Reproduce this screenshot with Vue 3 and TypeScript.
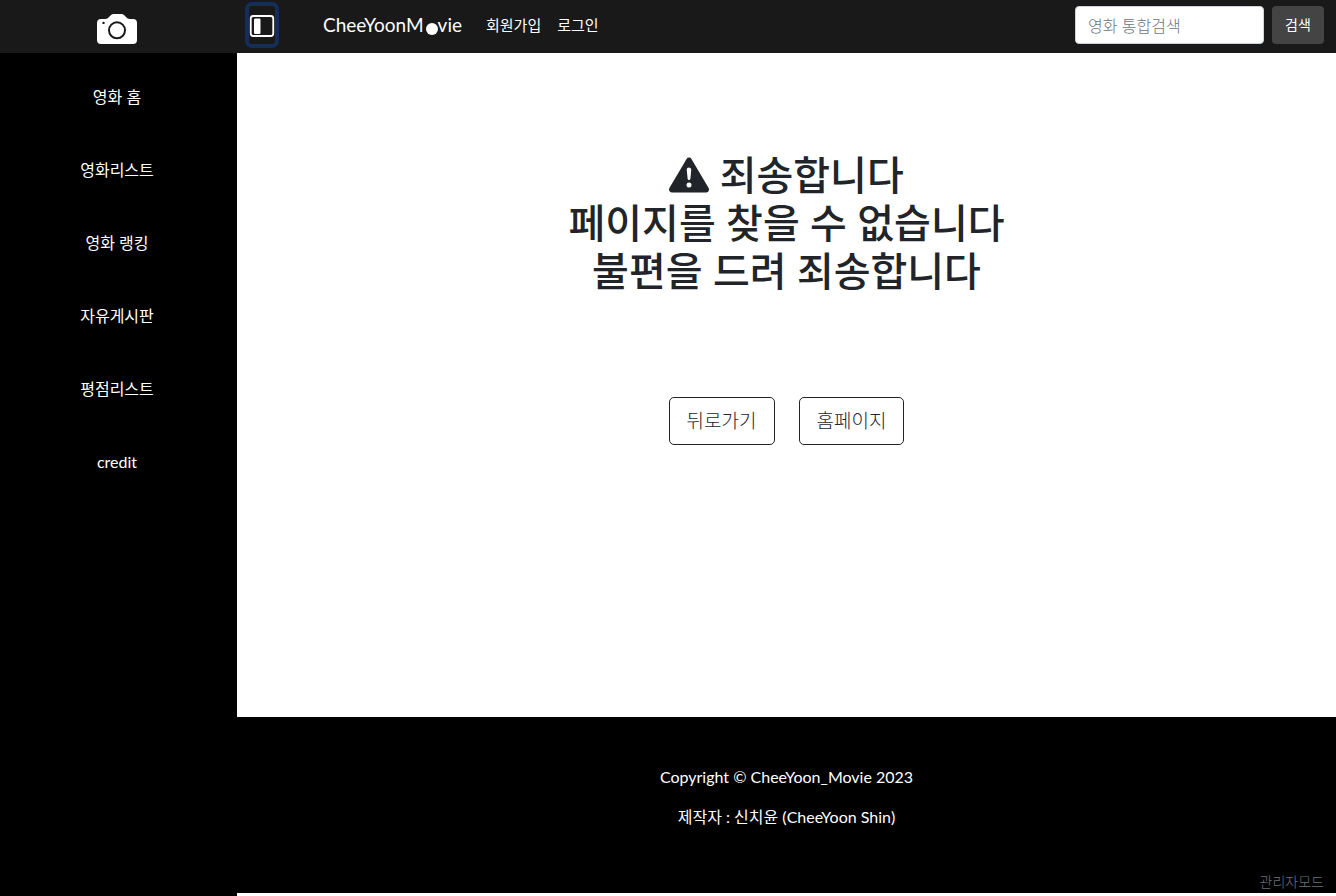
<script setup lang="ts">
import { ref } from 'vue'

const menu: string[] = ['영화 홈', '영화리스트', '영화 랭킹', '자유게시판', '평점리스트', 'credit']
const keyword = ref('')
</script>

<template>
  <div class="page">
    <header class="topbar">
      <a class="logo" href="#" aria-label="CheeYoonMovie">
        <svg width="42" height="32" viewBox="0 0 42 32" aria-hidden="true">
          <path
            fill="#fff"
            d="M5 6h4c2 0 3-1 4-2l2-2c1-1 2-1 3-1h7c1 0 2 0 3 1l2 2c1 1 2 2 4 2h3q4 0 4 4v17q0 4-4 4H5q-4 0-4-4V10q0-4 4-4z"
          />
          <circle cx="7.500" cy="9.900" r="1.200" fill="#191919" />
          <circle cx="21" cy="17.300" r="8" fill="none" stroke="#191919" stroke-width="2" />
        </svg>
      </a>
      <div class="bar">
        <button class="toggle" type="button" aria-label="메뉴">
          <svg width="26" height="24" viewBox="0 0 26 24" aria-hidden="true">
            <rect x="1.750" y="3" width="22.500" height="20" rx="2.500" fill="none" stroke="#fff" stroke-width="1.800" />
            <rect x="5" y="5.500" width="6.500" height="15.500" rx="1.200" fill="#fff" />
          </svg>
        </button>
        <a class="brand" href="#">CheeYoonM<span class="reel"></span>vie</a>
        <nav class="links">
          <a href="#">회원가입</a>
          <a href="#">로그인</a>
        </nav>
        <form class="search" @submit.prevent>
          <input v-model="keyword" type="text" placeholder="영화 통합검색" aria-label="영화 통합검색" />
          <button type="submit">검색</button>
        </form>
      </div>
    </header>

    <div class="body">
      <nav class="side">
        <a v-for="item in menu" :key="item" href="#">{{ item }}</a>
      </nav>
      <div class="content">
        <main>
          <h1>
            <svg class="warn" width="40" height="40" viewBox="0 0 16 16" aria-hidden="true">
              <path
                fill="currentColor"
                d="M8.982 1.566a1.130 1.130 0 0 0-1.960 0L.165 13.233c-.457.778.091 1.767.980 1.767h13.713c.889 0 1.438-.990.980-1.767L8.982 1.566zM8 5c.535 0 .954.462.900.995l-.350 3.507a.552.552 0 0 1-1.100 0L7.100 5.995A.905.905 0 0 1 8 5zm.002 6a1 1 0 1 1 0 2 1 1 0 0 1 0-2z"
              />
            </svg>
            죄송합니다<br />페이지를 찾을 수 없습니다<br />불편을 드려 죄송합니다
          </h1>
          <div class="actions">
            <button type="button">뒤로가기</button>
            <button type="button">홈페이지</button>
          </div>
        </main>
        <footer>
          <p>Copyright © CheeYoon_Movie 2023</p>
          <p>제작자 : 신치윤 (CheeYoon Shin)</p>
          <a class="admin" href="#">관리자모드</a>
        </footer>
      </div>
    </div>
  </div>
</template>

<style>
body {
  margin: 0;
  background: #fff;
}
</style>

<style scoped>
* {
  box-sizing: border-box;
}
.page {
  min-height: 100vh;
  display: flex;
  flex-direction: column;
  font-family: Lato, 'Noto Sans CJK KR', sans-serif;
  font-size: 16px;
  line-height: 24px;
  color: #212529;
}
a {
  color: #fff;
  text-decoration: none;
}
button,
input {
  font: inherit;
}
.topbar {
  height: 53px;
  display: flex;
  background: #191919;
}
.logo {
  width: 237px;
  flex: none;
  display: flex;
  justify-content: center;
  padding: 13px 3px 0 0;
}
.bar {
  flex: 1;
  display: flex;
  align-items: center;
  padding: 0 12px 3px 8px;
}
.toggle {
  width: 34px;
  height: 46px;
  padding: 0;
  display: flex;
  align-items: center;
  justify-content: center;
  background: none;
  border: 4px solid #142e57;
  border-radius: 7px;
}
.toggle svg {
  flex: none;
}
.brand {
  margin-left: 44px;
  font-size: 19px;
}
.reel {
  display: inline-block;
  width: 12px;
  height: 12px;
  margin-left: 2px;
  border-radius: 50%;
  background: #fff;
  vertical-align: -3px;
}
.links {
  display: flex;
  gap: 16px;
  margin-left: 24px;
}
.links a {
  font-size: 15px;
}
.search {
  display: flex;
  gap: 8px;
  margin-left: auto;
}
.search input {
  width: 189px;
  height: 38px;
  padding: 0 12px;
  color: #212529;
  background: #fff;
  border: 1px solid #ced4da;
  border-radius: 4px;
}
.search input::placeholder {
  color: #6c757d;
  font-weight: 300;
  opacity: 1;
}
.search button {
  width: 52px;
  height: 38px;
  padding: 0;
  font-size: 14px;
  color: #fff;
  background: #444;
  border: 0;
  border-radius: 4px;
}
.body {
  flex: 1;
  display: flex;
}
.side {
  width: 237px;
  flex: none;
  display: flex;
  flex-direction: column;
  align-items: center;
  gap: 49px;
  padding: 32px 3px 0 0;
  background: #000;
}
.content {
  flex: 1;
  display: flex;
  flex-direction: column;
  padding-bottom: 3px;
}
main {
  flex: 1;
  padding-top: 98px;
  text-align: center;
}
h1 {
  margin: 0;
  font-family: 'Noto Sans', 'Noto Sans CJK KR', sans-serif;
  font-size: 40px;
  font-weight: 500;
  line-height: 48px;
}
.warn {
  vertical-align: -5px;
}
.actions {
  display: flex;
  justify-content: center;
  gap: 24px;
  margin-top: 102px;
}
.actions button {
  height: 48px;
  padding: 0 17px;
  font-size: 19px;
  font-weight: 300;
  color: #212529;
  background: #fff;
  border: 1px solid #212529;
  border-radius: 5px;
}
footer {
  height: 176px;
  padding: 48px 12px 1px;
  display: flex;
  flex-direction: column;
  align-items: center;
  gap: 16px;
  color: #fff;
  background: #000;
}
footer p {
  margin: 0;
}
.admin {
  margin-top: auto;
  align-self: flex-end;
  font-size: 14px;
  line-height: 20px;
  font-weight: 300;
  color: #6c757d;
}
</style>
